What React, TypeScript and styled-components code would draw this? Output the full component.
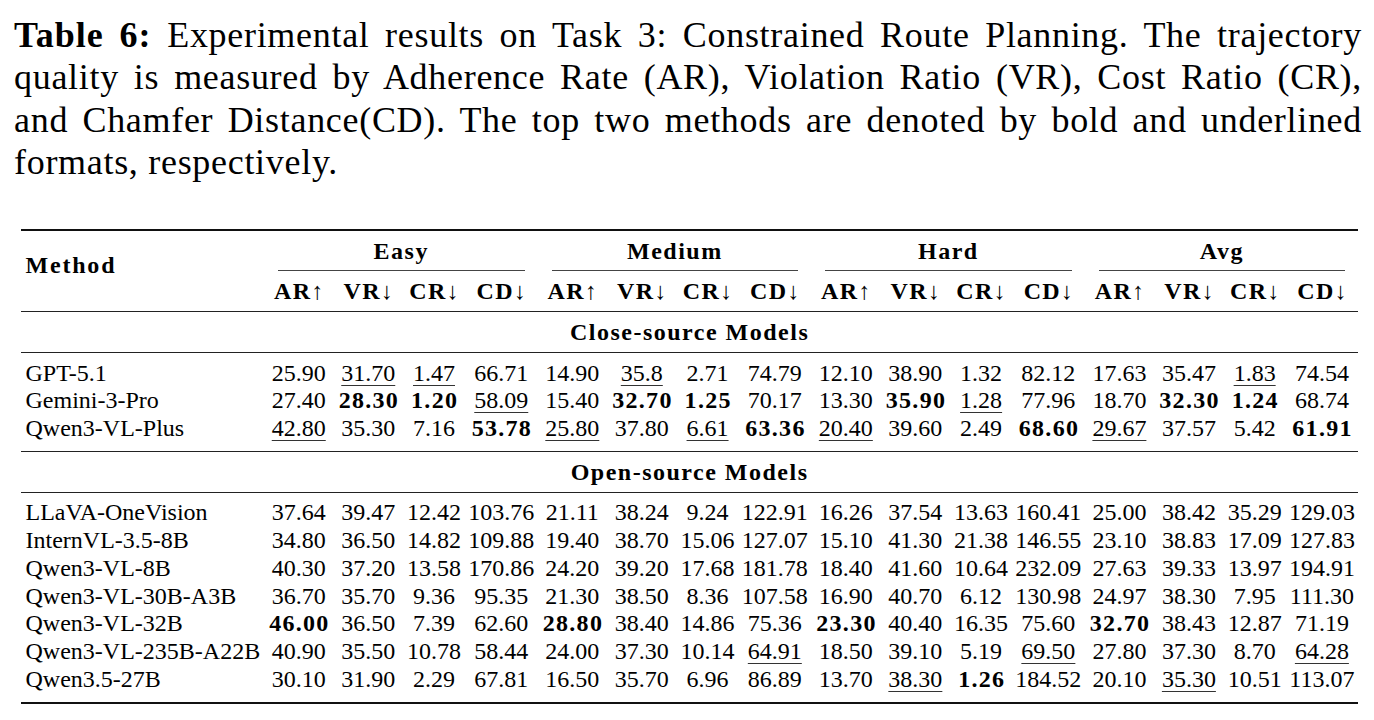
import React from "react";
import styled, { createGlobalStyle } from "styled-components";

const GlobalStyle = createGlobalStyle`
  html, body { margin: 0; padding: 0; background: #fff; }
`;

const Page = styled.div`
  width: 1374px;
  height: 720px;
  box-sizing: border-box;
  padding: 14px 12px 0 14px;
  overflow: hidden;
  background: #fff;
  color: #000;
  font-family: "Liberation Serif", "Times New Roman", serif;
`;

const Caption = styled.p`
  margin: 0;
  font-family: "Liberation Serif", serif;
  font-size: 36px;
  line-height: 42.3px;
  letter-spacing: 0.7px;
`;

const CaptionLine = styled.span<{ $last?: boolean }>`
  display: block;
  text-align: ${(p) => (p.$last ? "left" : "justify")};
  text-align-last: ${(p) => (p.$last ? "left" : "justify")};
`;

const Label = styled.b`
  font-weight: 700;
  letter-spacing: 1px;
`;

const Table = styled.table`
  margin: 46px 0 0 7px;
  width: 1337px;
  table-layout: fixed;
  border-collapse: collapse;
  font-family: "Liberation Serif", serif;
  font-size: 24px;
`;

const Col = styled.col<{ $w: number }>`
  width: ${(p) => p.$w}px;
`;

const HeadRow = styled.tr`
  border-top: 2px solid #111;
`;

const SubHeadRow = styled.tr`
  border-bottom: 1px solid #222;
`;

const MethodHead = styled.th`
  padding: 20px 0 0 4.5px;
  vertical-align: top;
  text-align: left;
  line-height: 28px;
  font-weight: 700;
  letter-spacing: 1.8px;
`;

const GroupHead = styled.th`
  padding: 0;
  vertical-align: bottom;
  font-weight: 700;
  letter-spacing: 1.5px;
`;

const GroupLabel = styled.div`
  box-sizing: border-box;
  height: 40px;
  line-height: 40px;
  margin: 0 13px 0 14px;
  border-bottom: 1px solid #444;
`;

const MetricHead = styled.th`
  padding: 0;
  height: 40px;
  line-height: 40px;
  text-align: center;
  font-weight: 700;
  letter-spacing: 1.4px;
  white-space: nowrap;
`;

const Arrow = styled.span`
  font-weight: 400;
  letter-spacing: 0;
`;

const SectionRow = styled.tr`
  border-top: 1px solid #222;
  border-bottom: 1px solid #222;
`;

const SectionCell = styled.td`
  padding: 0;
  height: 40px;
  line-height: 40px;
  text-align: center;
  font-weight: 700;
  letter-spacing: 1.5px;
`;

const DataRow = styled.tr<{ $first?: boolean; $last?: boolean; $end?: boolean }>`
  & > td {
    padding-top: ${(p) => (p.$first ? "6.5px" : "0")};
    padding-bottom: ${(p) => (p.$last ? "8px" : "0")};
  }
  border-bottom: ${(p) => (p.$end ? "2px solid #111" : "none")};
`;

const NameCell = styled.td`
  padding-left: 4.5px;
  line-height: 27.75px;
  text-align: left;
  white-space: nowrap;
`;

const ValueCell = styled.td`
  line-height: 27.75px;
  text-align: center;
  white-space: nowrap;
`;

const Num = styled.span<{ $b?: boolean; $u?: boolean }>`
  font-weight: ${(p) => (p.$b ? 700 : 400)};
  letter-spacing: ${(p) => (p.$b ? "1.3px" : "0")};
  margin-right: ${(p) => (p.$b ? "-1.3px" : "0")};
  text-decoration: ${(p) => (p.$u ? "underline" : "none")};
  text-decoration-thickness: 1px;
  text-underline-offset: 4px;
  text-decoration-color: #333;
`;

const widths = [69.5, 69.5, 62, 72.5];
const groups = ["Easy", "Medium", "Hard", "Avg"];
const metrics: [string, string][] = [
  ["AR", "↑"],
  ["VR", "↓"],
  ["CR", "↓"],
  ["CD", "↓"],
];

type Row = [string, string[]];

const closeRows: Row[] = [
  ["GPT-5.1", "25.90 u31.70 u1.47 66.71 14.90 u35.8 2.71 74.79 12.10 38.90 1.32 82.12 17.63 35.47 u1.83 74.54".split(" ")],
  ["Gemini-3-Pro", "27.40 b28.30 b1.20 u58.09 15.40 b32.70 b1.25 70.17 13.30 b35.90 u1.28 77.96 18.70 b32.30 b1.24 68.74".split(" ")],
  ["Qwen3-VL-Plus", "u42.80 35.30 7.16 b53.78 u25.80 37.80 u6.61 b63.36 u20.40 39.60 2.49 b68.60 u29.67 37.57 5.42 b61.91".split(" ")],
];

const openRows: Row[] = [
  ["LLaVA-OneVision", "37.64 39.47 12.42 103.76 21.11 38.24 9.24 122.91 16.26 37.54 13.63 160.41 25.00 38.42 35.29 129.03".split(" ")],
  ["InternVL-3.5-8B", "34.80 36.50 14.82 109.88 19.40 38.70 15.06 127.07 15.10 41.30 21.38 146.55 23.10 38.83 17.09 127.83".split(" ")],
  ["Qwen3-VL-8B", "40.30 37.20 13.58 170.86 24.20 39.20 17.68 181.78 18.40 41.60 10.64 232.09 27.63 39.33 13.97 194.91".split(" ")],
  ["Qwen3-VL-30B-A3B", "36.70 35.70 9.36 95.35 21.30 38.50 8.36 107.58 16.90 40.70 6.12 130.98 24.97 38.30 7.95 111.30".split(" ")],
  ["Qwen3-VL-32B", "b46.00 36.50 7.39 62.60 b28.80 38.40 14.86 75.36 b23.30 40.40 16.35 75.60 b32.70 38.43 12.87 71.19".split(" ")],
  ["Qwen3-VL-235B-A22B", "40.90 35.50 10.78 58.44 24.00 37.30 10.14 u64.91 18.50 39.10 5.19 u69.50 27.80 37.30 8.70 u64.28".split(" ")],
  ["Qwen3.5-27B", "30.10 31.90 2.29 67.81 16.50 35.70 6.96 86.89 13.70 u38.30 b1.26 184.52 20.10 u35.30 10.51 113.07".split(" ")],
];

function Value({ v }: { v: string }) {
  const bold = v.startsWith("b");
  const under = v.startsWith("u");
  const text = bold || under ? v.slice(1) : v;
  return (
    <ValueCell>
      <Num $b={bold} $u={under}>
        {text}
      </Num>
    </ValueCell>
  );
}

function Rows({ rows, end }: { rows: Row[]; end?: boolean }) {
  return (
    <>
      {rows.map(([name, vals], i) => (
        <DataRow key={name} $first={i === 0} $last={i === rows.length - 1} $end={end && i === rows.length - 1}>
          <NameCell>{name}</NameCell>
          {vals.map((v, j) => (
            <Value key={j} v={v} />
          ))}
        </DataRow>
      ))}
    </>
  );
}

export default function App() {
  return (
    <Page>
      <GlobalStyle />
      <Caption>
        <CaptionLine>
          <Label>Table 6:</Label> Experimental results on Task 3: Constrained Route Planning. The trajectory
        </CaptionLine>
        <CaptionLine>
          quality is measured by Adherence Rate (AR), Violation Ratio (VR), Cost Ratio (CR),
        </CaptionLine>
        <CaptionLine>
          and Chamfer Distance(CD). The top two methods are denoted by bold and underlined
        </CaptionLine>
        <CaptionLine $last>formats, respectively.</CaptionLine>
      </Caption>
      <Table>
        <colgroup>
          <Col $w={243} />
          {groups.map((g) => widths.map((w, i) => <Col key={g + i} $w={w} />))}
        </colgroup>
        <thead>
          <HeadRow>
            <MethodHead rowSpan={2}>Method</MethodHead>
            {groups.map((g) => (
              <GroupHead key={g} colSpan={4}>
                <GroupLabel>{g}</GroupLabel>
              </GroupHead>
            ))}
          </HeadRow>
          <SubHeadRow>
            {groups.map((g) =>
              metrics.map(([m, a]) => (
                <MetricHead key={g + m}>
                  {m}
                  <Arrow>{a}</Arrow>
                </MetricHead>
              ))
            )}
          </SubHeadRow>
        </thead>
        <tbody>
          <SectionRow>
            <SectionCell colSpan={17}>Close-source Models</SectionCell>
          </SectionRow>
          <Rows rows={closeRows} />
          <SectionRow>
            <SectionCell colSpan={17}>Open-source Models</SectionCell>
          </SectionRow>
          <Rows rows={openRows} end />
        </tbody>
      </Table>
    </Page>
  );
}
